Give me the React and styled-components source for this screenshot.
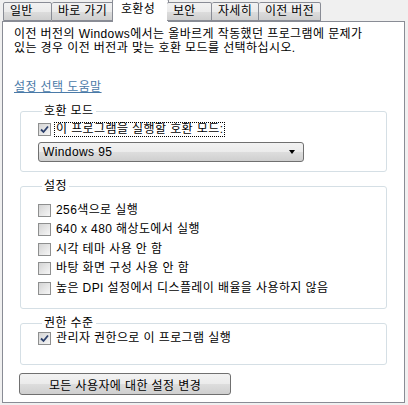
import React from "react";
import styled, { createGlobalStyle } from "styled-components";

const GlobalStyle = createGlobalStyle`
  html, body {
    margin: 0;
    padding: 0;
    background: #f0f0f0;
  }
  body {
    font-family: "Liberation Sans", "Noto Sans CJK KR", sans-serif;
    font-size: 12px;
    color: #000;
  }
`;

const Page = styled.div`
  width: 408px;
  height: 405px;
  box-sizing: border-box;
  padding-left: 2px;
  background: #f0f0f0;
  overflow: hidden;
`;

const TabStrip = styled.div`
  display: flex;
  align-items: flex-end;
  height: 21px;
  padding-left: 1px;
  position: relative;
  z-index: 1;
`;

const Tab = styled.div`
  box-sizing: border-box;
  width: ${(p) => p.$w}px;
  height: ${(p) => (p.$active ? 23 : 19)}px;
  margin: ${(p) => (p.$active ? "0 -2px -1px -2px" : "0")};
  border: 1px solid #898c95;
  border-bottom: ${(p) => (p.$active ? "none" : "1px solid #898c95")};
  border-left-width: ${(p) => (p.$first || p.$active ? 1 : 0)}px;
  background: ${(p) =>
    p.$active ? "#fff" : "linear-gradient(#f2f2f2, #ebebeb 50%, #dddddd 51%, #cfcfcf)"};
  border-radius: 2px 2px 0 0;
  display: flex;
  align-items: ${(p) => (p.$active ? "flex-start" : "center")};
  padding: ${(p) => (p.$active ? "2px 0 0 8px" : "0 0 0 6px")};
  line-height: 15px;
  letter-spacing: 0.3px;
  white-space: nowrap;
  ${(p) => p.$active && "& + div { border-left-width: 0; }"}
`;

const Panel = styled.div`
  box-sizing: border-box;
  width: 403px;
  height: 382px;
  background: #fff;
  border: 1px solid #898c95;
  padding: 5px 11px 0;
  display: flex;
  flex-direction: column;
  letter-spacing: 0.4px;
`;

const Description = styled.p`
  margin: 0;
  line-height: 14px;
  white-space: nowrap;
`;

const HelpLink = styled.a`
  margin-top: 25px;
  line-height: 14px;
  color: #4a7aa8;
  text-decoration: underline;
  align-self: flex-start;
`;

const Group = styled.fieldset`
  margin: ${(p) => p.$top}px 6px 0;
  padding: 0 17px ${(p) => p.$bottom}px;
  border: 1px solid #d5dfe5;
  border-radius: 3px;
  min-width: 0;
  display: flex;
  flex-direction: column;
  gap: ${(p) => p.$gap || 0}px;
`;

const Legend = styled.legend`
  padding: 0 2px;
  margin-left: 4px;
  line-height: 14px;
`;

const Row = styled.label`
  display: flex;
  align-items: center;
  gap: 3px;
  height: 14px;
  margin-top: ${(p) => p.$top || 0}px;
  white-space: nowrap;
`;

const RowText = styled.span`
  line-height: 13px;
  padding: 0 1px;
  border: 1px dotted ${(p) => (p.$focus ? "#000" : "transparent")};
`;

const Box = styled.span`
  box-sizing: border-box;
  width: 13px;
  height: 13px;
  flex: none;
  border: 1px solid #8e8f8f;
  background: linear-gradient(135deg, #d4d4d4, #f6f6f6);
  display: flex;
  align-items: center;
  justify-content: center;
`;

const Select = styled.div`
  box-sizing: border-box;
  width: 266px;
  height: 20px;
  margin-top: 6px;
  border: 1px solid #707070;
  border-radius: 3px;
  background: linear-gradient(#f2f2f2, #ebebeb 50%, #dddddd 51%, #cfcfcf);
  display: flex;
  align-items: center;
  justify-content: space-between;
  padding: 0 8px 0 4px;
`;

const Arrow = styled.span`
  width: 0;
  height: 0;
  border-left: 3.5px solid transparent;
  border-right: 3.5px solid transparent;
  border-top: 4px solid #000;
`;

const Button = styled.button`
  box-sizing: border-box;
  width: 212px;
  height: 22px;
  margin: 8px 0 0 5px;
  border: 1px solid #707070;
  border-radius: 3px;
  background: linear-gradient(#f2f2f2, #ebebeb 50%, #dddddd 51%, #cfcfcf);
  font: inherit;
  letter-spacing: inherit;
  color: #000;
  padding: 0;
  align-self: flex-start;
`;

const Check = ({ checked }) => (
  <Box>
    {checked && (
      <svg width="9" height="9" viewBox="0 0 9 9">
        <path d="M1 4.5 L3.5 7 L8 1.5" fill="none" stroke="#2b3f6b" strokeWidth="1.8" />
      </svg>
    )}
  </Box>
);

const tabs = [
  { label: "일반", w: 49 },
  { label: "바로 가기", w: 62 },
  { label: "호환성", w: 57, active: true },
  { label: "보안", w: 45 },
  { label: "자세히", w: 47 },
  { label: "이전 버전", w: 62 },
];

const settings = [
  "256색으로 실행",
  "640 x 480 해상도에서 실행",
  "시각 테마 사용 안 함",
  "바탕 화면 구성 사용 안 함",
  "높은 DPI 설정에서 디스플레이 배율을 사용하지 않음",
];

export default function App() {
  return (
    <Page>
      <GlobalStyle />
      <TabStrip>
        {tabs.map((t, i) => (
          <Tab key={t.label} $w={t.w} $active={t.active} $first={i === 0}>
            {t.label}
          </Tab>
        ))}
      </TabStrip>
      <Panel>
        <Description>
          이전 버전의 Windows에서는 올바르게 작동했던 프로그램에 문제가
          <br />
          있는 경우 이전 버전과 맞는 호환 모드를 선택하십시오.
        </Description>
        <HelpLink>설정 선택 도움말</HelpLink>

        <Group $top={10} $bottom={9}>
          <Legend>호환 모드</Legend>
          <Row $top={4}>
            <Check checked />
            <RowText $focus>이 프로그램을 실행할 호환 모드:</RowText>
          </Row>
          <Select>
            <span>Windows 95</span>
            <Arrow />
          </Select>
        </Group>

        <Group $top={7} $bottom={13} $gap={5.5}>
          <Legend>설정</Legend>
          {settings.map((s, i) => (
            <Row key={s} $top={i === 0 ? 10 : 0}>
              <Check />
              <RowText>{s}</RowText>
            </Row>
          ))}
        </Group>

        <Group $top={7} $bottom={19}>
          <Legend>권한 수준</Legend>
          <Row $top={1}>
            <Check checked />
            <RowText>관리자 권한으로 이 프로그램 실행</RowText>
          </Row>
        </Group>

        <Button>모든 사용자에 대한 설정 변경</Button>
      </Panel>
    </Page>
  );
}
